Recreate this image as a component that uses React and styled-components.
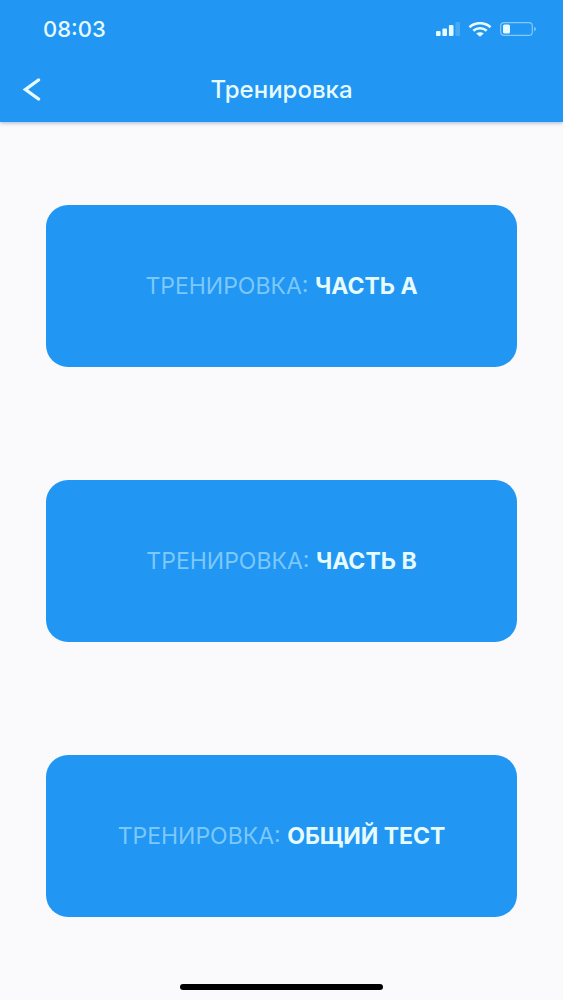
import React from "react";
import styled, { createGlobalStyle, ThemeProvider } from "styled-components";

const theme = {
  colors: {
    primary: "#2196f3",
    background: "#fafafc",
    text: "#e6fbff",
    textMuted: "#7cc8fb",
    indicator: "#000000",
  },
};

const trainings = [
  { id: "a", name: "ЧАСТЬ А" },
  { id: "b", name: "ЧАСТЬ В" },
  { id: "full", name: "ОБЩИЙ ТЕСТ" },
];

const GlobalStyle = createGlobalStyle`
  * {
    box-sizing: border-box;
  }

  body {
    margin: 0;
    background: ${(props) => props.theme.colors.background};
    font-family: Inter, "Liberation Sans", sans-serif;
  }
`;

const Screen = styled.div`
  display: flex;
  flex-direction: column;
  min-height: 100vh;
`;

const Header = styled.header`
  background: ${(props) => props.theme.colors.primary};
  color: ${(props) => props.theme.colors.text};
  box-shadow: 0 1px 4px rgba(40, 70, 140, 0.4);
`;

const StatusBar = styled.div`
  display: flex;
  align-items: center;
  justify-content: space-between;
  height: 58px;
  padding: 0 26px 0 43px;
`;

const Clock = styled.time`
  font-size: 22px;
  font-weight: 500;
  line-height: 28px;
`;

const StatusIcons = styled.div`
  display: flex;
  align-items: center;
  gap: 8px;
`;

const NavBar = styled.nav`
  display: grid;
  grid-template-columns: 64px 1fr 64px;
  align-items: center;
  height: 64px;
`;

const BackButton = styled.button`
  display: flex;
  align-items: center;
  height: 48px;
  padding: 0 0 0 22px;
  background: none;
  border: none;
  color: inherit;
  cursor: pointer;
`;

const Title = styled.h1`
  margin: 0;
  font-size: 24px;
  font-weight: 500;
  line-height: 28px;
  text-align: center;
`;

const TrainingList = styled.main`
  display: flex;
  flex: 1;
  flex-direction: column;
  gap: 113px;
  padding: 83px 46px 64px;
`;

const TrainingCard = styled.button`
  min-height: 162px;
  padding: 16px;
  background: ${(props) => props.theme.colors.primary};
  border: none;
  border-radius: 22px;
  color: ${(props) => props.theme.colors.textMuted};
  font-family: inherit;
  font-size: 23px;
  font-weight: 400;
  line-height: 28px;
  cursor: pointer;
`;

const TrainingName = styled.strong`
  color: ${(props) => props.theme.colors.text};
  font-weight: 700;
`;

const HomeIndicator = styled.div`
  align-self: center;
  width: 36%;
  height: 6px;
  margin-bottom: 10px;
  background: ${(props) => props.theme.colors.indicator};
  border-radius: 3px;
`;

const SignalIcon = () => (
  <svg width="25" height="14" viewBox="0 0 25 14" fill="currentColor" aria-hidden="true">
    <rect x="1" y="9" width="4.6" height="5" rx="1" />
    <rect x="7.4" y="6.5" width="4.6" height="7.5" rx="1" />
    <rect x="13.9" y="3" width="4.6" height="11" rx="1" />
    <rect x="20.4" y="0" width="4.6" height="14" rx="1" opacity="0.2" />
  </svg>
);

const WifiIcon = () => (
  <svg width="24" height="15" viewBox="0 0 24 15" fill="none" aria-hidden="true">
    <path d="M1.5 5.2C7.3-.1 16.7-.1 22.5 5.2" stroke="currentColor" strokeWidth="2.6" />
    <path d="M5.3 8.8C9.2 5.4 14.8 5.4 18.7 8.8" stroke="currentColor" strokeWidth="2.5" />
    <path d="M8.2 11.5C10.4 9.7 13.6 9.7 15.8 11.5L12 14.8Z" fill="currentColor" />
  </svg>
);

const BatteryIcon = () => (
  <svg width="37" height="14" viewBox="0 0 37 14" fill="none" aria-hidden="true">
    <rect x="0.7" y="0.7" width="31.6" height="12.6" rx="3.4" stroke="currentColor" strokeWidth="1.2" opacity="0.5" />
    <rect x="3" y="2.5" width="7" height="9" rx="1.5" fill="currentColor" />
    <path d="M34.2 4.8C36.5 5.6 36.5 8.4 34.2 9.2Z" fill="currentColor" opacity="0.5" />
  </svg>
);

const BackIcon = () => (
  <svg width="20" height="24" viewBox="0 0 20 24" fill="none" aria-hidden="true">
    <path
      d="M16.5 2L3.5 11.5L16.5 21"
      stroke="currentColor"
      strokeWidth="3.4"
      strokeLinecap="round"
      strokeLinejoin="miter"
    />
  </svg>
);

const App = () => {
  return (
    <ThemeProvider theme={theme}>
      <GlobalStyle />
      <Screen>
        <Header>
          <StatusBar>
            <Clock dateTime="08:03">08:03</Clock>
            <StatusIcons>
              <SignalIcon />
              <WifiIcon />
              <BatteryIcon />
            </StatusIcons>
          </StatusBar>
          <NavBar>
            <BackButton type="button" aria-label="Назад">
              <BackIcon />
            </BackButton>
            <Title>Тренировка</Title>
          </NavBar>
        </Header>
        <TrainingList>
          {trainings.map((training) => (
            <TrainingCard key={training.id} type="button">
              ТРЕНИРОВКА: <TrainingName>{training.name}</TrainingName>
            </TrainingCard>
          ))}
        </TrainingList>
        <HomeIndicator />
      </Screen>
    </ThemeProvider>
  );
};

export default App;
